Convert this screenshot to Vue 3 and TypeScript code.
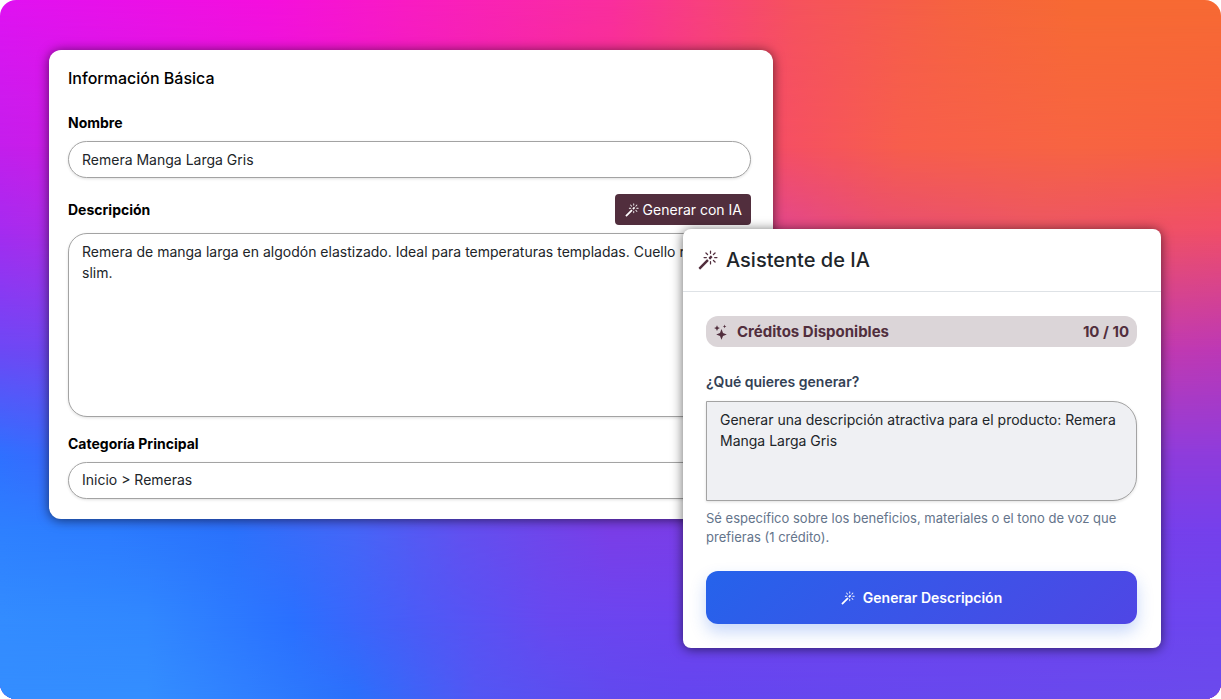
<script setup lang="ts">
import { ref } from 'vue'

const wand =
  'M9.5 2.672a.5.5 0 1 0 1 0V.843a.5.5 0 0 0-1 0v1.829Zm4.5.035A.5.5 0 0 0 13.293 2L12 3.293a.5.5 0 1 0 .707.707L14 2.707ZM7.293 4A.5.5 0 1 0 8 3.293L6.707 2A.5.5 0 0 0 6 2.707L7.293 4Zm-.621 2.5a.5.5 0 1 0 0-1H4.843a.5.5 0 1 0 0 1h1.829Zm8.485 0a.5.5 0 1 0 0-1h-1.829a.5.5 0 0 0 0 1h1.829ZM13.293 10A.5.5 0 1 0 14 9.293L12.707 8a.5.5 0 1 0-.707.707L13.293 10ZM9.5 11.157a.5.5 0 0 0 1 0V9.328a.5.5 0 0 0-1 0v1.829Zm1.854-5.097a.5.5 0 0 0 0-.706l-.708-.708a.5.5 0 0 0-.707 0L8.646 5.94a.5.5 0 0 0 0 .707l.708.708a.5.5 0 0 0 .707 0l1.293-1.293Zm-3 3a.5.5 0 0 0 0-.706l-.708-.708a.5.5 0 0 0-.707 0L.646 13.94a.5.5 0 0 0 0 .707l.707.707a.5.5 0 0 0 .707 0L8.354 9.06Z'

const nombre = ref('Remera Manga Larga Gris')
const descripcion = ref(
  'Remera de manga larga en algodón elastizado. Ideal para temperaturas templadas. Cuello redondo slim.',
)
const categoria = ref('inicio-remeras')
const pedido = ref('Generar una descripción atractiva para el producto: Remera Manga Larga Gris')
const creditos = { disponibles: 10, total: 10 }
</script>

<template>
  <main class="stage">
    <div class="layer r0"></div>
    <div class="layer r1"></div>
    <div class="layer r2"></div>
    <div class="layer r3"></div>
    <div class="layer r4"></div>
    <div class="layer r5"></div>
    <div class="layer r6"></div>
    <div class="layer r7"></div>

    <form class="card info" @submit.prevent>
      <h2 class="info-title">Información Básica</h2>

      <label class="label" for="nombre">Nombre</label>
      <input id="nombre" v-model="nombre" class="field line" type="text" />

      <div class="label-row">
        <label class="label" for="descripcion">Descripción</label>
        <button class="btn-ai" type="button">
          <svg class="icon-sm" viewBox="0 0 16 16" aria-hidden="true"><path :d="wand" /></svg>
          <span>Generar con IA</span>
        </button>
      </div>
      <textarea id="descripcion" v-model="descripcion" class="field area"></textarea>

      <label class="label spaced" for="categoria">Categoría Principal</label>
      <select id="categoria" v-model="categoria" class="field line select">
        <option value="inicio-remeras">Inicio &gt; Remeras</option>
      </select>
    </form>

    <section class="card assistant">
      <header class="assistant-head">
        <svg class="icon-lg" viewBox="0 0 16 16" aria-hidden="true"><path :d="wand" /></svg>
        <h2 class="assistant-title">Asistente de IA</h2>
      </header>
      <div class="assistant-body">
        <div class="credits">
          <svg class="icon-stars" viewBox="0 0 16 16" aria-hidden="true">
            <path d="M8.5 5L10 8.9L13.8 10.4L10 11.9L8.5 15.8L7 11.9L3.2 10.4L7 8.9Z" />
            <path d="M4 1.2L4.9 3.2L6.9 4.1L4.9 5L4 7L3.1 5L1.1 4.1L3.1 3.2Z" />
            <path d="M11.6 .6L12.1 1.9L13.4 2.4L12.1 2.9L11.6 4.2L11.1 2.9L9.8 2.4L11.1 1.9Z" />
          </svg>
          <span>Créditos Disponibles</span>
          <span class="count">{{ creditos.disponibles }} / {{ creditos.total }}</span>
        </div>
        <label class="prompt-label" for="pedido">¿Qué quieres generar?</label>
        <textarea id="pedido" v-model="pedido" class="field prompt"></textarea>
        <p class="hint">
          Sé específico sobre los beneficios, materiales o el tono de voz que prefieras (1 crédito).
        </p>
        <button class="btn-main" type="button">
          <svg class="icon-sm" viewBox="0 0 16 16" aria-hidden="true"><path :d="wand" /></svg>
          <span>Generar Descripción</span>
        </button>
      </div>
    </section>
  </main>
</template>

<style>
body {
  margin: 0;
  background: #fff;
}
</style>

<style scoped>
.stage,
.stage * {
  box-sizing: border-box;
}
.stage {
  position: relative;
  isolation: isolate;
  overflow: hidden;
  min-height: 100vh;
  border-radius: 16px;
  padding: 50px 60px 50px 49px;
  display: grid;
  grid-template-columns: minmax(0, 634fr) minmax(0, 90fr) minmax(0, 388fr);
  align-items: start;
  font-family: Inter, 'Liberation Sans', sans-serif;
  font-size: 14px;
  line-height: 21px;
  color: #212529;
}

/* Mesh background: horizontal colour rows, each fading in over the one above */
.layer {
  position: absolute;
  inset: 0;
  z-index: -1;
}
.r0 {
  background: linear-gradient(90deg, #e012f2, #f50fde 22%, #f91bc4 33%, #fa2e9e 50%, #f6525e 65%, #f66340 78%, #f76a33 88%, #f76a33);
}
.r1 {
  background: linear-gradient(90deg, #c41eec, #e818d0 27%, #f5308e 50%, #f54d66 63%, #f75e4c 74%, #f76442 88%, #f76040);
  mask-image: linear-gradient(transparent 0%, #000 21%);
}
.r2 {
  background: linear-gradient(90deg, #a52bf0, #d030c0 27%, #e04090 50%, #e2478e 63%, #e84e72 72%, #ec5664 85%, #f04e68);
  mask-image: linear-gradient(transparent 21%, #000 33%);
}
.r3 {
  background: linear-gradient(90deg, #6d48f5, #a040d0 50%, #d040a0 78%, #bd38b5);
  mask-image: linear-gradient(transparent 33%, #000 50%);
}
.r4 {
  background: linear-gradient(90deg, #2f70ff, #6d48f5 25%, #8e3cdc 60%, #8e3cdc);
  mask-image: linear-gradient(transparent 50%, #000 65%);
}
.r5 {
  background: linear-gradient(90deg, #2e80ff, #2c7cff 9%, #2a72fc 19%, #4566f8 29%, #6250f0 38%, #7a3ee8 50%, #7540ec);
  mask-image: linear-gradient(transparent 65%, #000 76%);
}
.r6 {
  background: linear-gradient(90deg, #338cff, #3188ff 12%, #2a70ff 24%, #4e59f6 35%, #6848f0 45%, #6e42ef 56%, #6c46ef);
  mask-image: linear-gradient(transparent 76%, #000 89%);
}
.r7 {
  background: linear-gradient(90deg, #348dff, #348eff 12%, #3080ff 20%, #2a70fb 29%, #5356f3 39%, #6149ee 50%, #6446ef 56%, #6b4aec);
  mask-image: linear-gradient(transparent 89%, #000 100%);
}

.card {
  grid-row: 1;
  background: #fff;
  box-shadow: 0 1px 12px rgba(0, 0, 0, 0.6);
}
.info {
  grid-column: 1 / 3;
  border-radius: 12px;
  padding: 16px 22px 20px 19px;
}
.info-title {
  margin: 0 0 22px;
  font-size: 16px;
  line-height: 24px;
  font-weight: 500;
  color: #000;
}
.label {
  display: block;
  font-weight: 700;
  color: #000;
}
.spaced {
  margin-top: 16px;
}
.field {
  display: block;
  width: 100%;
  margin: 8px 0 0;
  border: 1px solid #a3a3a3;
  border-radius: 19px;
  padding: 7px 13px;
  font: inherit;
  color: #212529;
  background: #fff;
  box-shadow: 0 1px 3px rgba(0, 0, 0, 0.12);
  outline: none;
  resize: none;
  appearance: none;
}
.line {
  height: 37px;
}
.select {
  padding-bottom: 8px;
  padding-top: 6px;
}
.area {
  height: 184px;
}
.label-row {
  display: flex;
  align-items: center;
  justify-content: space-between;
  margin-top: 16px;
}
.btn-ai {
  display: flex;
  align-items: center;
  gap: 4px;
  height: 31px;
  padding: 0 9px 0 10px;
  border: 0;
  border-radius: 4px;
  background: #512e3d;
  color: #fff;
  font: inherit;
}
svg {
  fill: currentColor;
  flex: none;
}
.icon-sm {
  width: 14px;
  height: 14px;
}
.icon-lg {
  width: 20px;
  height: 20px;
  color: #512e3d;
}
.icon-stars {
  width: 16px;
  height: 16px;
  margin-right: 8px;
}

.assistant {
  grid-column: 2 / 4;
  margin-top: 179px;
  border-radius: 8px;
}
.assistant-head {
  display: flex;
  align-items: center;
  gap: 8px;
  padding: 16px 15px;
  border-bottom: 1px solid #dee2e6;
}
.assistant-title {
  margin: 0;
  font-size: 20px;
  line-height: 30px;
  font-weight: 500;
}
.assistant-body {
  padding: 24px 24px 24px 23px;
}
.credits {
  display: flex;
  align-items: center;
  height: 31px;
  padding: 0 8px 0 7px;
  border-radius: 12px;
  background: #dbd5d8;
  color: #512e3d;
  font-size: 15px;
  font-weight: 700;
}
.count {
  margin-left: auto;
}
.prompt-label {
  display: block;
  margin-top: 24px;
  font-weight: 600;
  color: #334155;
}
.prompt {
  margin-top: 9px;
  height: 100px;
  border-radius: 0 24px 24px 0;
  background: #eff0f3;
}
.hint {
  margin: 8px 0 24px;
  font-size: 13px;
  line-height: 19px;
  color: #64748b;
}
.btn-main {
  display: flex;
  align-items: center;
  justify-content: center;
  gap: 8px;
  width: 100%;
  height: 53px;
  border: 0;
  border-radius: 12px;
  background: linear-gradient(135deg, #2563eb, #4f46e5);
  color: #fff;
  font: inherit;
  font-weight: 600;
  box-shadow: 0 8px 16px rgba(37, 99, 235, 0.25);
}
</style>
